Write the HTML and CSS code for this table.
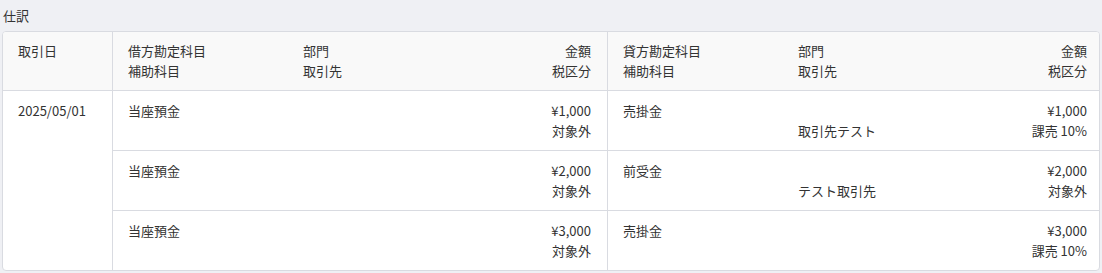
FILE: index.html
```html
<!DOCTYPE html>
<html lang="ja">
<head>
<meta charset="utf-8">
<link rel="stylesheet" href="styles.css">
</head>
<body>
<div class="page">
  <div class="title">仕訳</div>
  <div class="card">
    <div class="cell head date">取引日</div>
    <div class="cell head side debit">
      <div class="l">借方勘定科目<br>補助科目</div>
      <div class="l">部門<br>取引先</div>
      <div class="r">金額<br>税区分</div>
    </div>
    <div class="cell head side credit">
      <div class="l">貸方勘定科目<br>補助科目</div>
      <div class="l">部門<br>取引先</div>
      <div class="r">金額<br>税区分</div>
    </div>

    <div class="cell date body-date">2025/05/01</div>

    <div class="cell side debit row">
      <div class="l">当座預金<br>&nbsp;</div>
      <div class="l">&nbsp;<br>&nbsp;</div>
      <div class="r">¥1,000<br>対象外</div>
    </div>
    <div class="cell side credit row">
      <div class="l">売掛金<br>&nbsp;</div>
      <div class="l">&nbsp;<br>取引先テスト</div>
      <div class="r">¥1,000<br>課売 10%</div>
    </div>

    <div class="cell side debit row">
      <div class="l">当座預金<br>&nbsp;</div>
      <div class="l">&nbsp;<br>&nbsp;</div>
      <div class="r">¥2,000<br>対象外</div>
    </div>
    <div class="cell side credit row">
      <div class="l">前受金<br>&nbsp;</div>
      <div class="l">&nbsp;<br>テスト取引先</div>
      <div class="r">¥2,000<br>対象外</div>
    </div>

    <div class="cell side debit row last">
      <div class="l">当座預金<br>&nbsp;</div>
      <div class="l">&nbsp;<br>&nbsp;</div>
      <div class="r">¥3,000<br>対象外</div>
    </div>
    <div class="cell side credit row last">
      <div class="l">売掛金<br>&nbsp;</div>
      <div class="l">&nbsp;<br>&nbsp;</div>
      <div class="r">¥3,000<br>課売 10%</div>
    </div>
  </div>
</div>
</body>
</html>
```

FILE: styles.css
```css
html, body {
  margin: 0;
  padding: 0;
  background: #eff0f4;
}
body {
  font-family: "Noto Sans CJK JP", "Noto Sans", sans-serif;
  font-size: 13px;
  line-height: 19.5px;
  color: #333;
}
.page {
  padding: 6px 2px 0 2px;
}
.title {
  line-height: 20px;
  padding-left: 1px;
  margin-bottom: 5px;
}
.card {
  background: #fff;
  border: 1px solid #d9dbe1;
  border-radius: 4px;
  overflow: hidden;
  display: grid;
  grid-template-columns: 110px 495px 1fr;
}
.cell {
  box-sizing: border-box;
}
.head {
  background: #f9f9f9;
  border-bottom: 1px solid #d9dbe1;
  padding-top: 9px;
  padding-bottom: 10px;
}
.date {
  border-right: 1px solid #d9dbe1;
  padding-left: 15px;
}
.body-date {
  grid-row: 2 / span 3;
  grid-column: 1;
  padding-top: 10px;
}
.side {
  display: grid;
  grid-template-columns: 175px 1fr auto;
  padding-left: 15px;
}
.debit {
  border-right: 1px solid #d9dbe1;
  padding-right: 16px;
}
.credit {
  padding-right: 12px;
}
.row {
  padding-top: 10px;
  padding-bottom: 10px;
  border-bottom: 1px solid #d9dbe1;
}
.row.last {
  border-bottom: none;
}
.r {
  text-align: right;
}
```
